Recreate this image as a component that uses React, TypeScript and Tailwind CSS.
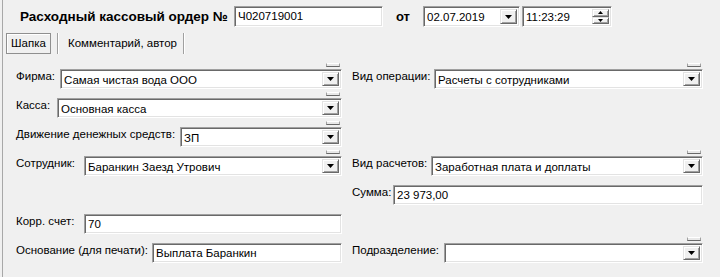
import React from "react";

const sunken =
  "bg-white border border-t-[#a0a0a0] border-l-[#a0a0a0] border-b-white border-r-white shadow-[inset_1px_1px_0_#696969,inset_-1px_-1px_0_#e3e3e3]";
const raised =
  "bg-[#f0f0f0] border border-t-[#e3e3e3] border-l-[#e3e3e3] border-b-[#696969] border-r-[#696969] shadow-[inset_1px_1px_0_#ffffff,inset_-1px_-1px_0_#a0a0a0]";

function Tri() {
  return (
    <svg width="7" height="4" viewBox="0 0 7 4">
      <polygon points="0,0 7,0 3.5,4" fill="#000" />
    </svg>
  );
}

function DropBtn() {
  return (
    <div className={`${raised} w-[17px] h-full flex items-center justify-center shrink-0`}>
      <Tri />
    </div>
  );
}

function Combo({ value }: { value: string }) {
  return (
    <div className="flex flex-col items-end flex-1 min-w-0">
      <div className="h-[4px] w-[14px] mr-[2px] mb-[2px] bg-[#e8e8e8] border-t border-t-white border-b border-b-[#696969] border-x border-x-[#a0a0a0]" />
      <div className={`${sunken} w-full h-[20px] flex items-stretch p-[2px]`}>
        <span className="flex-1 leading-[16px] pl-[1px] text-[11.5px] text-black truncate">{value}</span>
        <DropBtn />
      </div>
    </div>
  );
}

function TextBox({ value }: { value: string }) {
  return (
    <div className="flex-1 pt-[6px] min-w-0">
      <div className={`${sunken} w-full h-[20px] flex items-center px-[3px]`}>
        <span className="text-[11.5px] leading-[16px] text-black">{value}</span>
      </div>
    </div>
  );
}

function Label({ text, w }: { text: string; w: string }) {
  return <div className={`${w} shrink-0 pt-[6px] leading-[14px] text-[11.5px] text-black whitespace-nowrap`}>{text}</div>;
}

function Row({ children }: { children: React.ReactNode }) {
  return <div className="h-[29px] flex">{children}</div>;
}

function Left({ children }: { children?: React.ReactNode }) {
  return <div className="w-[326px] flex shrink-0">{children}</div>;
}
function Right({ children }: { children?: React.ReactNode }) {
  return <div className="w-[351px] ml-[10px] flex shrink-0">{children}</div>;
}

export default function App() {
  return (
    <div className="w-[720px] h-[277px] bg-[#f0f0f0] overflow-hidden font-['Liberation_Sans',Arial,sans-serif] flex">
      <div className="w-[2px] shrink-0" />
      <div className="w-[1px] bg-[#a8a8a8] shrink-0" />
      <div className="flex-1 flex flex-col">
        {/* header */}
        <div className="flex items-center pt-[6px] h-[27px]">
          <div className="w-[231px] shrink-0 pl-[17px] text-[13.5px] font-bold text-black whitespace-nowrap leading-[16px]">
            Расходный кассовый ордер №
          </div>
          <div className={`${sunken} w-[149px] shrink-0 h-[21px] flex items-center px-[3px]`}>
            <span className="text-[11.5px] text-black">Ч020719001</span>
          </div>
          <div className="w-[40px] shrink-0 pl-[13px] text-[13px] font-bold text-black">от</div>
          <div className={`${sunken} w-[97px] shrink-0 h-[21px] flex items-stretch p-[2px]`}>
            <span className="flex-1 text-[11.5px] leading-[17px] pl-[1px] text-black">02.07.2019</span>
            <DropBtn />
          </div>
          <div className={`${sunken} w-[90px] shrink-0 h-[21px] ml-[2px] flex items-stretch p-[2px]`}>
            <span className="flex-1 text-[11.5px] leading-[17px] pl-[1px] text-black">11:23:29</span>
            <div className="w-[17px] flex flex-col shrink-0">
              <div className={`${raised} flex-1 flex items-center justify-center`}>
                <svg width="5" height="3" viewBox="0 0 5 3"><polygon points="0,3 5,3 2.5,0" fill="#000" /></svg>
              </div>
              <div className={`${raised} flex-1 flex items-center justify-center`}>
                <svg width="5" height="3" viewBox="0 0 5 3"><polygon points="0,0 5,0 2.5,3" fill="#000" /></svg>
              </div>
            </div>
          </div>
        </div>

        {/* tabs */}
        <div className="flex items-stretch mt-[6px] h-[21px] pl-[3px]">
          <div className="w-[45px] border border-[#8f8f8f] shadow-[inset_1px_1px_0_#ffffff] flex items-center justify-center text-[11.5px] text-black">
            Шапка
          </div>
          <div className="w-[1px] bg-[#a0a0a0] ml-[6px]" />
          <div className="w-[1px] bg-white" />
          <div className="px-[9px] flex items-center text-[11.5px] text-black whitespace-nowrap w-[124px]">
            Комментарий, автор
          </div>
          <div className="w-[1px] bg-[#a0a0a0]" />
          <div className="w-[1px] bg-white" />
        </div>

        {/* fields */}
        <div className="flex flex-col mt-[9px] pl-[13px]">
          <Row>
            <Left>
              <Label text="Фирма:" w="w-[44px]" />
              <Combo value="Самая чистая вода ООО" />
            </Left>
            <Right>
              <Label text="Вид операции:" w="w-[82px]" />
              <Combo value="Расчеты с сотрудниками" />
            </Right>
          </Row>
          <Row>
            <Left>
              <Label text="Касса:" w="w-[41px]" />
              <Combo value="Основная касса" />
            </Left>
            <Right />
          </Row>
          <Row>
            <Left>
              <Label text="Движение денежных средств:" w="w-[164px]" />
              <Combo value="ЗП" />
            </Left>
            <Right />
          </Row>
          <Row>
            <Left>
              <Label text="Сотрудник:" w="w-[68px]" />
              <Combo value="Баранкин Заезд Утрович" />
            </Left>
            <Right>
              <Label text="Вид расчетов:" w="w-[79px]" />
              <Combo value="Заработная плата и доплаты" />
            </Right>
          </Row>
          <Row>
            <Left />
            <Right>
              <Label text="Сумма:" w="w-[41px]" />
              <TextBox value="23 973,00" />
            </Right>
          </Row>
          <Row>
            <Left>
              <Label text="Корр. счет:" w="w-[68px]" />
              <TextBox value="70" />
            </Left>
            <Right />
          </Row>
          <Row>
            <Left>
              <Label text="Основание (для печати):" w="w-[136px]" />
              <TextBox value="Выплата Баранкин" />
            </Left>
            <Right>
              <Label text="Подразделение:" w="w-[92px]" />
              <Combo value="" />
            </Right>
          </Row>
        </div>
      </div>
    </div>
  );
}
